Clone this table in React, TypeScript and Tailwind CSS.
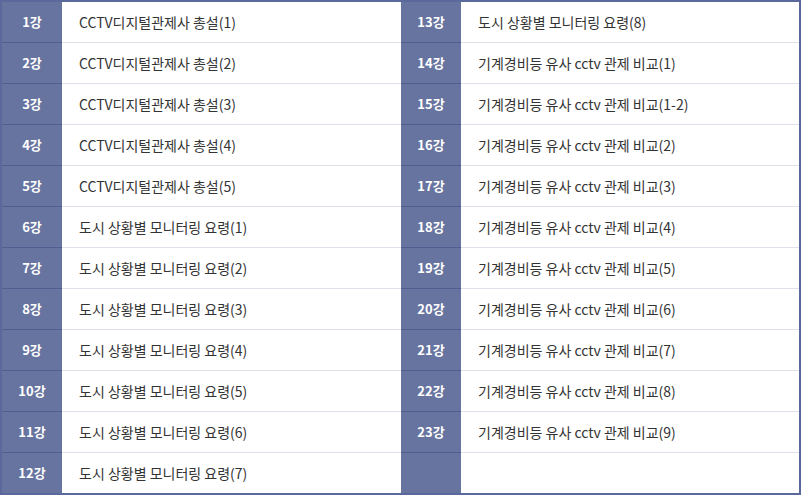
const left = [
  "CCTV디지털관제사 총설(1)",
  "CCTV디지털관제사 총설(2)",
  "CCTV디지털관제사 총설(3)",
  "CCTV디지털관제사 총설(4)",
  "CCTV디지털관제사 총설(5)",
  "도시 상황별 모니터링 요령(1)",
  "도시 상황별 모니터링 요령(2)",
  "도시 상황별 모니터링 요령(3)",
  "도시 상황별 모니터링 요령(4)",
  "도시 상황별 모니터링 요령(5)",
  "도시 상황별 모니터링 요령(6)",
  "도시 상황별 모니터링 요령(7)",
];

const right = [
  "도시 상황별 모니터링 요령(8)",
  "기계경비등 유사 cctv 관제 비교(1)",
  "기계경비등 유사 cctv 관제 비교(1-2)",
  "기계경비등 유사 cctv 관제 비교(2)",
  "기계경비등 유사 cctv 관제 비교(3)",
  "기계경비등 유사 cctv 관제 비교(4)",
  "기계경비등 유사 cctv 관제 비교(5)",
  "기계경비등 유사 cctv 관제 비교(6)",
  "기계경비등 유사 cctv 관제 비교(7)",
  "기계경비등 유사 cctv 관제 비교(8)",
  "기계경비등 유사 cctv 관제 비교(9)",
  "",
];

export default function App() {
  return (
    <div
      className="w-[801px] h-[496px] bg-white"
      style={{ fontFamily: '"Noto Sans CJK KR", "Noto Sans", sans-serif' }}
    >
      <div className="border-2 border-[#5a689b] flex flex-col">
        {left.map((title, i) => {
          const last = i === left.length - 1;
          const rNo = i + 13;
          return (
            <div key={i} className="flex h-[41px] last:h-[40px]">
              <div
                className={`w-[60px] flex items-center justify-center bg-[#67749f] text-white font-bold text-[13px] ${
                  last ? "" : "border-b border-[#515e8f]"
                }`}
              >
                {i + 1}강
              </div>
              <div
                className={`w-[339px] flex items-center pl-[17px] text-[14px] text-[#333] ${
                  last ? "" : "border-b border-[#dfe1ea]"
                }`}
              >
                {title}
              </div>
              <div
                className={`w-[60px] flex items-center justify-center bg-[#67749f] text-white font-bold text-[13px] ${
                  last ? "" : "border-b border-[#515e8f]"
                }`}
              >
                {right[i] ? `${rNo}강` : ""}
              </div>
              <div
                className={`flex-1 flex items-center pl-[17px] text-[14px] text-[#333] ${
                  last ? "" : "border-b border-[#dfe1ea]"
                }`}
              >
                {right[i]}
              </div>
            </div>
          );
        })}
      </div>
    </div>
  );
}
